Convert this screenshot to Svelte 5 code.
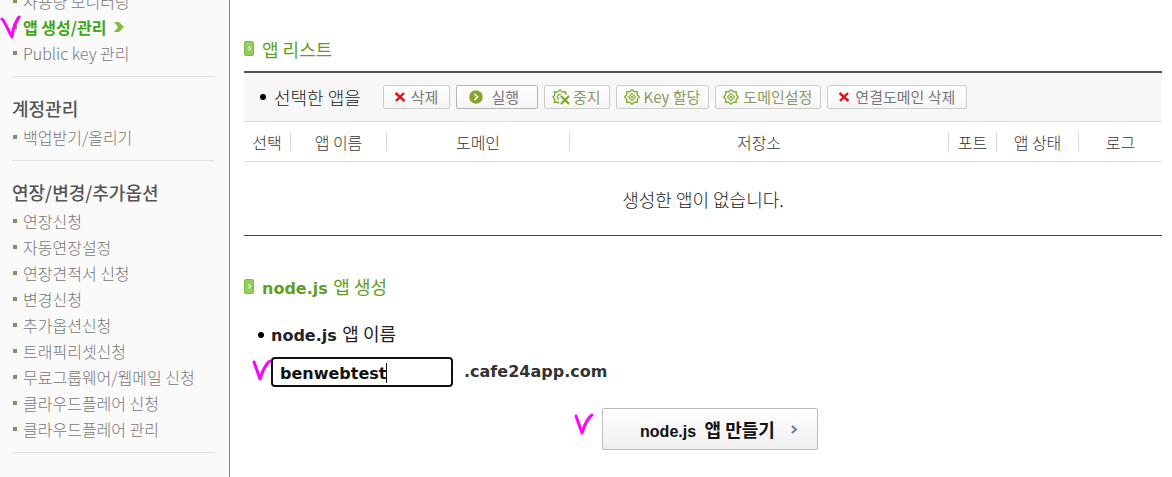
<script>
  import { onMount } from 'svelte';

  let appName = 'benwebtest';
  let nameInput;
  let context;
  let caretX = 0;

  const menus = [
    {
      title: '',
      items: ['사용량 모니터링', '앱 생성/관리', 'Public key 관리']
    },
    {
      title: '계정관리',
      items: ['백업받기/올리기']
    },
    {
      title: '연장/변경/추가옵션',
      items: [
        '연장신청',
        '자동연장설정',
        '연장견적서 신청',
        '변경신청',
        '추가옵션신청',
        '트래픽리셋신청',
        '무료그룹웨어/웹메일 신청',
        '클라우드플레어 신청',
        '클라우드플레어 관리'
      ]
    }
  ];
  const current = '앱 생성/관리';

  const actions = [
    { label: '삭제', icon: 'cross', size: 'small' },
    { label: '실행', icon: 'run', size: 'medium' },
    { label: '중지', icon: 'stop', size: 'tight' },
    { label: 'Key 할당', icon: 'gear', size: 'tight' },
    { label: '도메인설정', icon: 'gear', size: 'tight' },
    { label: '연결도메인 삭제', icon: 'cross', size: 'small' }
  ];

  const columns = [
    { label: '선택', name: 'select' },
    { label: '앱 이름', name: 'name' },
    { label: '도메인', name: 'domain' },
    { label: '저장소', name: 'repo' },
    { label: '포트', name: 'port' },
    { label: '앱 상태', name: 'status' },
    { label: '로그', name: 'log' }
  ];

  // the caret does not blink, so it is drawn after the text before the selection
  const placeCaret = () => {
    const text = nameInput.value.slice(0, nameInput.selectionStart);
    caretX = Math.round(context.measureText(text).width);
  };

  onMount(() => {
    context = document.createElement('canvas').getContext('2d');
    context.font = 'bold 16px "DejaVu Sans", Verdana, sans-serif';
    nameInput.focus();
    nameInput.setSelectionRange(appName.length, appName.length);
    placeCaret();
  });
</script>

{#snippet badge()}
  <svg class="badge" width="10" height="15" viewBox="0 0 10 15" aria-hidden="true">
    <rect x="0.5" y="0.5" width="9" height="14" rx="1.5" fill="#94cf5c" stroke="#7cbb49" />
    <path d="M4.5 5.5 L6.5 7.5 L4.5 9.5" fill="none" stroke="#e9f8da" stroke-width="1.2" />
  </svg>
{/snippet}

{#snippet check()}
  <path fill="none" stroke="#ff00ff" stroke-width="3" stroke-linecap="round" stroke-linejoin="round" d="M2 4 L8 21 C10 15 12 7 18 3" />
{/snippet}

<div class="page">
  <nav class="sidebar">
    {#each menus as menu}
      <section>
        {#if menu.title}
          <h2>{menu.title}</h2>
        {/if}
        <ul>
          {#each menu.items as item}
            <li class:current={item === current}>
              {#if item === current}
                <svg class="mark" width="22" height="26" viewBox="0 0 22 26" aria-hidden="true">
                  <path d="M2 5 C4 6 9 18 12 23 C13 14 16 7 19 3" fill="none" stroke="#ff00ff" stroke-width="3" stroke-linecap="round" stroke-linejoin="round" />
                </svg>
              {/if}
              <a href="#menu">{item}</a>
              {#if item === current}
                <svg class="arrow" width="10" height="10" viewBox="0 0 10 10" aria-hidden="true">
                  <path d="M0 0 H5 L10 5 L5 10 H0 L4 5 Z" fill="#8ab840" />
                </svg>
              {/if}
            </li>
          {/each}
        </ul>
      </section>
    {/each}
  </nav>

  <main>
    <h1>{@render badge()}앱 리스트</h1>
    <div class="toolbar">
      <span class="bullet"></span>
      <span class="target">선택한 앱을</span>
      <div class="actions">
        {#each actions as action}
          <button type="button" class="action {action.size} {action.icon}">
            {#if action.icon === 'cross'}
              <svg width="10" height="10" viewBox="0 0 10 10" aria-hidden="true">
                <path d="M0.5 1 L9.5 9 M9 1 L1 9" stroke="#dd1515" stroke-width="2.4" />
              </svg>
            {:else if action.icon === 'run'}
              <svg width="14" height="14" viewBox="0 0 14 14" aria-hidden="true">
                <circle cx="7" cy="7" r="6.8" fill="#86a52c" />
                <path d="M5.5 4 L8.5 7 L5.5 10" fill="none" stroke="#fff" stroke-width="1.5" />
              </svg>
            {:else if action.icon === 'stop'}
              <svg width="18" height="16" viewBox="0 0 18 16" aria-hidden="true">
                <path d="M14 6 L13.5 2.8 L10.5 3 L8 1 L5.5 3 L2.5 2.8 L2.8 6 L1 8 L2.8 10.5 L2.5 13.2 L5.5 13 L7 14.5" fill="none" stroke="#8cae3a" stroke-width="1.5" />
                <path d="M9 5.5 L6.8 5.5 L5 8 L7 10.5" fill="none" stroke="#8cae3a" stroke-width="1.3" />
                <path d="M9 7 L17 15 M17 7 L9 15" stroke="#7fa62b" stroke-width="2.2" />
              </svg>
            {:else}
              <svg width="16" height="16" viewBox="0 0 16 16" aria-hidden="true">
                <path d="M8 0.8 L10.3 2.7 L13.2 2.8 L13.3 5.7 L15.2 8 L13.3 10.3 L13.2 13.2 L10.3 13.3 L8 15.2 L5.7 13.3 L2.8 13.2 L2.7 10.3 L0.8 8 L2.7 5.7 L2.8 2.8 L5.7 2.7 Z" fill="none" stroke="#8cae3a" stroke-width="1.4" />
                <path d="M8 4.4 L11.6 8 L8 11.6 L4.4 8 Z" fill="none" stroke="#8cae3a" stroke-width="1.1" />
                <circle cx="8" cy="8" r="1.3" fill="#8cae3a" />
              </svg>
            {/if}
            {action.label}
          </button>
        {/each}
      </div>
    </div>

    <table>
      <thead>
        <tr>
          {#each columns as column}
            <th class={column.name} scope="col"><span>{column.label}</span></th>
          {/each}
        </tr>
      </thead>
      <tbody>
        <tr>
          <td colspan={columns.length}>생성한 앱이 없습니다.</td>
        </tr>
      </tbody>
    </table>

    <form on:submit|preventDefault>
      <h1>{@render badge()}<span><b>node.js&nbsp;</b>앱 생성</span></h1>
      <label for="app-name"><span class="bullet"></span><span><b>node.js&nbsp;</b>앱 이름</span></label>
      <div class="field">
        <svg class="mark" width="20" height="24" viewBox="0 0 20 24" aria-hidden="true">{@render check()}</svg>
        <div class="entry">
          <input
            id="app-name"
            type="text"
            autocomplete="off"
            spellcheck="false"
            maxlength="14"
            bind:this={nameInput}
            bind:value={appName}
            on:input={placeCaret}
            on:keyup={placeCaret}
            on:click={placeCaret}
          />
          <span class="caret" style="left: {caretX + 9}px"></span>
        </div>
        <b>.cafe24app.com</b>
      </div>
      <div class="submit">
        <button type="submit" class="create">
          <svg class="mark" width="20" height="24" viewBox="0 0 20 24" aria-hidden="true">{@render check()}</svg>
          <span><b>node.js&nbsp;</b> 앱 만들기</span>
          <svg width="7" height="9" viewBox="0 0 7 9" aria-hidden="true">
            <path d="M1 1 L5 4.5 L1 8" fill="none" stroke="#5f7fa8" stroke-width="2" />
          </svg>
        </button>
      </div>
    </form>
  </main>
</div>

<style>
  :global(body) {
    margin: 0;
    background: #fff;
  }

  .page {
    display: flex;
    min-height: 100vh;
    overflow: hidden;
    font-family: "Noto Sans CJK KR", sans-serif;
    font-size: 16px;
    color: #222;
  }

  b {
    font-family: "DejaVu Sans", Verdana, sans-serif;
    font-size: 16px;
    font-weight: bold;
  }

  .sidebar {
    flex: none;
    box-sizing: border-box;
    width: 230px;
    margin-top: -12px;
    padding: 0 14px 0 12px;
    background: #fafafa;
    border-right: 1px solid #808080;
  }

  section {
    padding-bottom: 10px;
    margin-bottom: 17px;
    border-bottom: 1px solid #e3e3e3;
  }

  h2 {
    margin: 0 0 2px;
    font-size: 18px;
    font-weight: 500;
    line-height: 28px;
    color: #555;
  }

  ul {
    margin: 0;
    padding: 0;
    list-style: none;
  }

  li {
    position: relative;
    display: flex;
    align-items: center;
    height: 26px;
  }

  li::before {
    content: '';
    width: 4px;
    height: 4px;
    margin: 0 6px 0 1px;
    background: #7d9160;
  }

  li a {
    font-weight: 300;
    color: #777;
    text-decoration: none;
    white-space: nowrap;
  }

  .current a {
    font-weight: bold;
    color: #3fa51c;
  }

  .arrow {
    margin-left: 8px;
  }

  .mark {
    position: absolute;
    overflow: visible;
  }

  .sidebar .mark {
    left: -12px;
    top: 0;
  }

  main {
    flex: 1;
    min-width: 0;
    padding: 35px 10px 24px 14px;
  }

  h1 {
    display: flex;
    align-items: center;
    gap: 8px;
    margin: 0;
    font-size: 18px;
    font-weight: 400;
    line-height: 28px;
    color: #5f9e22;
  }

  .badge {
    margin-bottom: 2px;
  }

  .bullet {
    flex: none;
    width: 6px;
    height: 6px;
    border-radius: 50%;
    background: #000;
  }

  .toolbar {
    display: flex;
    align-items: center;
    height: 48px;
    margin-top: 8px;
    padding-left: 16px;
    background: #f7f7f7;
    border-top: 2px solid #555;
    border-bottom: 1px solid #ddd;
  }

  .target {
    margin: 0 22px 0 8px;
    font-size: 18px;
    font-weight: 300;
    white-space: nowrap;
  }

  .actions {
    display: flex;
    gap: 6px;
  }

  .action {
    display: flex;
    align-items: center;
    height: 24px;
    gap: 6px;
    padding: 0 11px;
    border: 1px solid #ccc;
    border-radius: 2px;
    background: linear-gradient(#fff, #f5f5f5);
    font-family: inherit;
    font-size: 15px;
    line-height: 20px;
    color: #777;
    white-space: nowrap;
  }

  .action.medium {
    gap: 8px;
    padding: 0 18px 0 12px;
    border-color: #b5b5b5;
  }

  .action.tight {
    gap: 4px;
    padding: 0 8px 0 7px;
    color: #8a9a62;
  }

  .action.stop {
    gap: 3px;
  }

  table {
    width: 100%;
    table-layout: fixed;
    border-collapse: collapse;
  }

  th {
    height: 39px;
    padding: 0;
    border-bottom: 1px solid #ddd;
    font-weight: 300;
    color: #333;
  }

  th span {
    display: block;
    height: 18px;
    border-right: 1px solid #d5d5dc;
    line-height: 18px;
  }

  th:last-child span {
    border-right: 0;
  }

  .select { width: 47px; }
  .name { width: 96px; }
  .domain { width: 183px; }
  .port { width: 48px; }
  .status { width: 82px; }
  .log { width: 83px; }

  td {
    height: 73px;
    padding: 0;
    border-bottom: 1px solid #444;
    font-size: 18px;
    font-weight: 300;
    text-align: center;
  }

  form {
    padding-top: 36px;
  }

  label {
    display: flex;
    align-items: center;
    gap: 7px;
    margin-top: 16px;
    padding-left: 14px;
    font-size: 18px;
    line-height: 28px;
  }

  .field {
    position: relative;
    display: flex;
    align-items: center;
    gap: 11px;
    margin-top: 7px;
    padding-left: 27px;
    color: #333;
  }

  .field b {
    padding-bottom: 2px;
  }

  .field .mark {
    left: 8px;
    top: 1px;
  }

  .entry {
    position: relative;
    display: flex;
  }

  input {
    box-sizing: border-box;
    width: 182px;
    height: 30px;
    padding: 2px 7px 0;
    border: 2px solid #111;
    border-radius: 4px;
    outline: 0;
    background: #fff;
    font: bold 16px "DejaVu Sans", Verdana, sans-serif;
    color: #111;
    caret-color: transparent;
  }

  .caret {
    position: absolute;
    top: 6px;
    width: 1px;
    height: 20px;
    background: #111;
  }

  .submit {
    display: flex;
    justify-content: center;
    margin-top: 21px;
    padding-left: 14px;
  }

  .create {
    position: relative;
    display: flex;
    align-items: center;
    gap: 16px;
    height: 42px;
    padding: 0 19px 0 37px;
    border: 1px solid #bbb;
    border-radius: 2px;
    background: linear-gradient(#fff, #efefef);
    font-family: inherit;
    font-size: 18px;
    font-weight: bold;
    color: #111;
  }

  .create b {
    font-family: "Liberation Sans", Arial, sans-serif;
  }

  .create .mark {
    left: -29px;
    top: 3px;
  }
</style>
